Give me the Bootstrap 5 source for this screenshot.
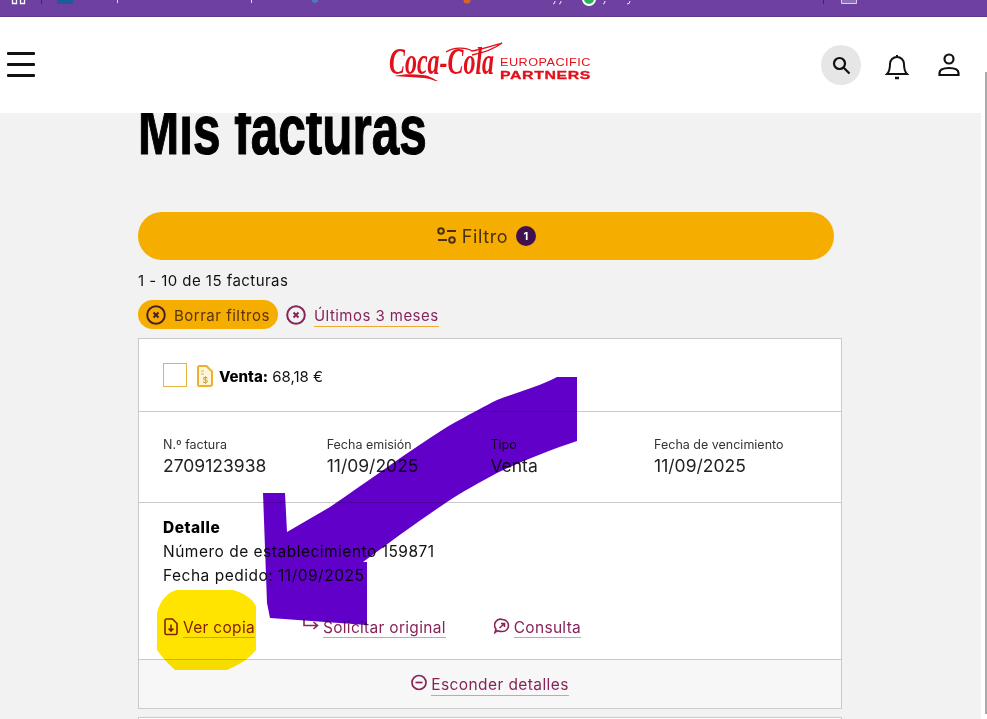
<!DOCTYPE html>
<html lang="es">
<head>
<meta charset="utf-8">
<title>Mis facturas</title>
<link href="https://cdn.jsdelivr.net/npm/bootstrap@5.3.0/dist/css/bootstrap.min.css" rel="stylesheet">
<style>
html,body{height:719px;overflow:hidden;background:#fff}
body{font-family:"Inter","Noto Sans",sans-serif;color:#111;font-size:15px;position:relative;letter-spacing:.45px}
.chrome-bar{height:17px;background:#6e41a0;border-bottom:1px solid #5f3a8c}
.chrome-bar svg{display:block}
.site-head{height:96px;background:#fff;position:relative;z-index:2;padding:0 26px 0 7px}
.burger{width:28px;display:flex;flex-direction:column;gap:8px;margin-top:-1px}
.burger i{display:block;height:3px;background:#111;border-radius:1px}
.logo-slot{position:absolute;left:388px;top:23px;text-decoration:none}
.logo-slot svg{display:block}
.head-tools{gap:20px}
.round-search{width:40px;height:40px;border-radius:50%;background:#e6e6e6;margin-right:4px}
.page-area{background:#f2f2f2;margin-right:6px;height:606px;padding-left:138px;display:flow-root}
.page-col{width:696px}
.page-title{font-family:"Liberation Sans",sans-serif;font-weight:700;font-size:70px;line-height:70px;margin:-18px 0 47px;color:#000;position:relative;z-index:1;letter-spacing:0;transform:scaleX(.707);transform-origin:left center;white-space:nowrap;-webkit-text-stroke:1.2px #000}
.filter-btn{height:48px;background:#f5ae00;border:0;color:#4a2f12;font-size:18px;width:100%;letter-spacing:.6px}
.filter-btn:hover{background:#f5ae00;color:#4a2f12}
.count-dot{width:20px;height:20px;border-radius:50%;background:#40104f;color:#fff;font-size:11px;font-weight:700}
.result-count{line-height:24px;margin-top:9px;font-size:15px}
.chips-row{margin-top:7px;height:29px;gap:8px}
.chip-on{height:29px;background:#f5ae00;border-radius:15px;padding:0 8px;gap:8px;color:#5a3210;font-size:15px;width:140px;letter-spacing:.5px;white-space:nowrap}
.chip-link{gap:8px}
.maroon{color:#86245a;text-decoration:none;border-bottom:1px solid #eda933;line-height:20px;display:inline-block;font-size:15px}
.bill{width:704px;margin-top:9px;background:#fff;border:1px solid #cacaca}
.bill-top{height:73px;padding:24px 24px 0;border-bottom:1px solid #cacaca;gap:10px}
.tick-box{width:24px;height:24px;border:1px solid #e5b544;background:#fff}
.bill-type{font-size:15px;margin-left:-4px;line-height:27px;letter-spacing:0}
.bill-type b{font-weight:800;color:#000}
.bill-data{height:91px;padding:24px 24px 0;border-bottom:1px solid #cacaca;letter-spacing:0}
.data-cell{width:163.7px;flex:none}
.data-label{font-size:12.5px;line-height:18px;color:#333}
.data-value{font-size:17.5px;line-height:24px;color:#222}
.bill-more{height:157px;padding:13px 24px 0;border-bottom:1px solid #cacaca;line-height:24px;font-size:15.5px;letter-spacing:.5px}
.bill-more b{font-weight:800;color:#000}
.bill-actions{margin-top:30px;gap:48px;letter-spacing:.3px}
.bill-actions .maroon{font-size:15.5px;line-height:19px}
.act{gap:4px}
.bill-foot{height:48px;background:#f7f7f7;padding-top:2px}
.bill-foot .maroon{font-size:15.5px;letter-spacing:.4px}
.bill-next{width:704px;height:30px;margin-top:8px;background:#fff;border:1px solid #cacaca}
.scroll-thumb{position:absolute;left:985px;top:72px;width:2px;height:642px;background:#a9a9a9;z-index:3}
.scribble{position:absolute;left:0;top:0;z-index:4;mix-blend-mode:multiply;pointer-events:none}
</style>
</head>
<body>
<div class="chrome-bar">
<svg width="987" height="16" viewBox="0 0 987 16" aria-hidden="true">
<path d="M12.500 0v3.500h4V0M20.500 0v3.500h4V0" fill="none" stroke="#fff" stroke-width="1.300"/>
<rect x="41" y="0" width="1" height="4" fill="#3d2560"/>
<rect x="57" y="0" width="16" height="4" fill="#1f5a99"/>
<rect x="117" y="0" width="1" height="3" fill="#e6d4f2"/>
<rect x="251" y="0" width="1" height="3" fill="#e6d4f2"/>
<circle cx="315" cy="0" r="3" fill="#4c7bc0"/>
<circle cx="467" cy="0" r="3.500" fill="#d8642a"/>
<path d="M553 4q2 0 2-3M559 4q2 0 2-3M603 4q2 0 2-3M627 4q3 0 3-3" fill="none" stroke="#f2e9f7" stroke-width="1"/>
<circle cx="589" cy="-1" r="6" fill="#2fae5c" stroke="#fff" stroke-width="2"/>
<rect x="823" y="0" width="1" height="4" fill="#3d2560"/>
<path d="M841.500 0v3.500h15V0" fill="#8d6fb5" stroke="#d9cfe6"/>
</svg>
</div>

<header class="site-head d-flex align-items-center justify-content-between">
<div class="burger" aria-label="Menú"><i></i><i></i><i></i></div>
<a class="logo-slot" href="#" aria-label="Coca-Cola Europacific Partners">
<svg width="204" height="50" viewBox="0 0 204 50">
<text transform="translate(1 34) scale(.63 1)" font-family="Liberation Serif" font-style="italic" font-weight="700" font-size="38" fill="#e2101b" letter-spacing="0">Coca-Cola</text>
<path d="M6 36c10 1 20 1 30 2s8 3 14 3c-6-3-10-6-16-6-10-1-18-1-28 1z" fill="#e2101b"/>
<path d="M58 12C66 7 78 7 84 11c8-1 20-5 30-8-8 6-20 10-30 12" fill="none" stroke="#e2101b" stroke-width="1.300"/>
<text x="112" y="25.500" font-family="Liberation Sans" font-size="11.800" fill="#e2101b" textLength="91" lengthAdjust="spacingAndGlyphs">EUROPACIFIC</text>
<text x="112" y="38.500" font-family="Liberation Sans" font-weight="700" font-size="11.800" fill="#e2101b" textLength="91" lengthAdjust="spacingAndGlyphs" stroke="#e2101b" stroke-width=".3">PARTNERS</text>
</svg>
</a>
<div class="head-tools d-flex align-items-center">
<span class="round-search d-flex align-items-center justify-content-center">
<svg width="22" height="22" viewBox="0 0 22 22" fill="none" stroke="#111" stroke-width="2.200"><circle cx="9.500" cy="9.500" r="5.500"/><path d="M13.500 13.500l6 6"/></svg>
</span>
<svg width="24" height="26" viewBox="0 0 24 26" fill="none" stroke="#111" stroke-width="2" style="margin-top:4px"><path d="M12 3a7 7 0 0 0-7 7c0 6-1 8-3 10h20c-2-2-3-4-3-10a7 7 0 0 0-7-7zM12 1v2"/><path d="M10 24h4" stroke-width="2.500"/></svg>
<svg width="24" height="26" viewBox="0 0 24 26" fill="none" stroke="#111" stroke-width="2.200" style="margin-left:8px"><circle cx="12" cy="7" r="4.500"/><path d="M2.500 23v-2c0-3.500 4-5 9.500-5s9.500 1.500 9.500 5v2z"/></svg>
</div>
</header>

<main class="page-area">
<div class="page-col">
<h1 class="page-title">Mis facturas</h1>
<button class="btn rounded-pill filter-btn d-flex align-items-center justify-content-center gap-1" type="button">
<svg width="22" height="20" viewBox="0 0 22 20" fill="none" stroke="#4a2f12" stroke-width="2"><circle cx="5" cy="5" r="2.800"/><path d="M11 5h9M2 14h9"/><circle cx="16" cy="14" r="2.800"/></svg>
<span>Filtro</span>
<span class="count-dot d-inline-flex align-items-center justify-content-center ms-1">1</span>
</button>
<div class="result-count">1 - 10 de 15 facturas</div>
<div class="chips-row d-flex align-items-center">
<span class="chip-on d-flex align-items-center">
<svg width="20" height="20" viewBox="0 0 20 20" fill="none" stroke="#4a1c2e" stroke-width="2"><circle cx="10" cy="10" r="8.800"/><path d="M7.500 7.500l5 5M12.500 7.500l-5 5"/></svg>
<span class="pt-1">Borrar filtros</span>
</span>
<span class="chip-link d-flex align-items-center">
<svg width="20" height="20" viewBox="0 0 20 20" fill="none" stroke="#86245a" stroke-width="2"><circle cx="10" cy="10" r="8.800"/><path d="M7.500 7.500l5 5M12.500 7.500l-5 5"/></svg>
<a class="maroon mt-1" href="#">Últimos 3 meses</a>
</span>
</div>

<article class="bill">
<div class="bill-top d-flex align-items-start">
<span class="tick-box"></span>
<svg width="16" height="22" viewBox="0 0 16 22" fill="#fff5d8" stroke="#edb02f" stroke-width="2" style="margin-top:2px"><path d="M2.500 1h7l5.500 5.500V19a2 2 0 0 1-2 2H2.500a1.500 1.500 0 0 1-1.500-1.500V2.500A1.500 1.500 0 0 1 2.500 1z"/><path d="M4 6h3M4 9h3" stroke-width="1.200"/><text x="8.500" y="18" font-family="Liberation Sans" font-size="9" fill="#b9851e" stroke="none" text-anchor="middle">$</text></svg>
<span class="bill-type"><b>Venta:</b> 68,18 €</span>
</div>
<div class="bill-data d-flex">
<div class="data-cell"><div class="data-label">N.º factura</div><div class="data-value">2709123938</div></div>
<div class="data-cell"><div class="data-label">Fecha emisión</div><div class="data-value">11/09/2025</div></div>
<div class="data-cell"><div class="data-label">Tipo</div><div class="data-value">Venta</div></div>
<div class="data-cell"><div class="data-label">Fecha de vencimiento</div><div class="data-value">11/09/2025</div></div>
</div>
<div class="bill-more">
<div><b>Detalle</b></div>
<div>Número de establecimiento 159871</div>
<div>Fecha pedido: 11/09/2025</div>
<div class="bill-actions d-flex align-items-center">
<span class="act d-flex align-items-start">
<svg width="16" height="18" viewBox="0 0 14 18" fill="none" stroke="#86245a" stroke-width="1.600"><path d="M2.500 1h6L13 5.500V15a1.500 1.500 0 0 1-1.500 1.500h-9A1.500 1.500 0 0 1 1 15V2.500A1.500 1.500 0 0 1 2.500 1z"/><path d="M7 6.500v6M4.500 10.500L7 13l2.500-2.500"/></svg>
<a class="maroon" href="#">Ver copia</a>
</span>
<span class="act d-flex align-items-start">
<svg width="16" height="14" viewBox="0 0 16 14" fill="none" stroke="#86245a" stroke-width="1.600" style="margin-top:1px"><path d="M1 0v6.500h13M10.500 3l4 3.500-4 3.500"/></svg>
<a class="maroon" href="#">Solicitar original</a>
</span>
<span class="act d-flex align-items-start">
<svg width="16" height="17" viewBox="0 0 16 17" fill="none" stroke="#86245a" stroke-width="1.600"><path d="M8.500 1.500a6 6 0 0 1 0 12c-2 0-3.500-.2-5-.8L1 14.500l1-3.500a6 6 0 0 1 6.500-9.500z"/><path d="M5.500 10l5-4.500M7 5.500h3.500V9"/></svg>
<a class="maroon" href="#">Consulta</a>
</span>
</div>
</div>
<div class="bill-foot d-flex align-items-center justify-content-center gap-1">
<svg width="16" height="17" viewBox="0 0 16 17" fill="none" stroke="#86245a" stroke-width="1.700" style="margin-top:-6px"><circle cx="8" cy="8.500" r="7"/><path d="M4.500 8.500h7"/></svg>
<a class="maroon" href="#">Esconder detalles</a>
</div>
</article>
<div class="bill-next"></div>
</div>
</main>

<div class="scroll-thumb"></div>

<svg class="scribble" width="987" height="719" viewBox="0 0 987 719" aria-hidden="true">
<path d="M157 613C160 600 168 592 177 590L233 590C246 594 254 600 256 607L256 650C248 660 238 665 227 670L175 670C168 664 162 657 157 650Z" fill="#ffe400"/>
<path d="M557 377L577 377L577 441C550 450 520 462 497 473C480 482 462 492 447 502C420 520 390 542 363 562L367 562L367 625L270 618L267 603L263 493L285 493L287 532L330 507C370 480 410 450 447 427C470 414 485 406 497 400C518 392 540 386 557 377Z" fill="#6000c8"/>
</svg>
</body>
</html>
